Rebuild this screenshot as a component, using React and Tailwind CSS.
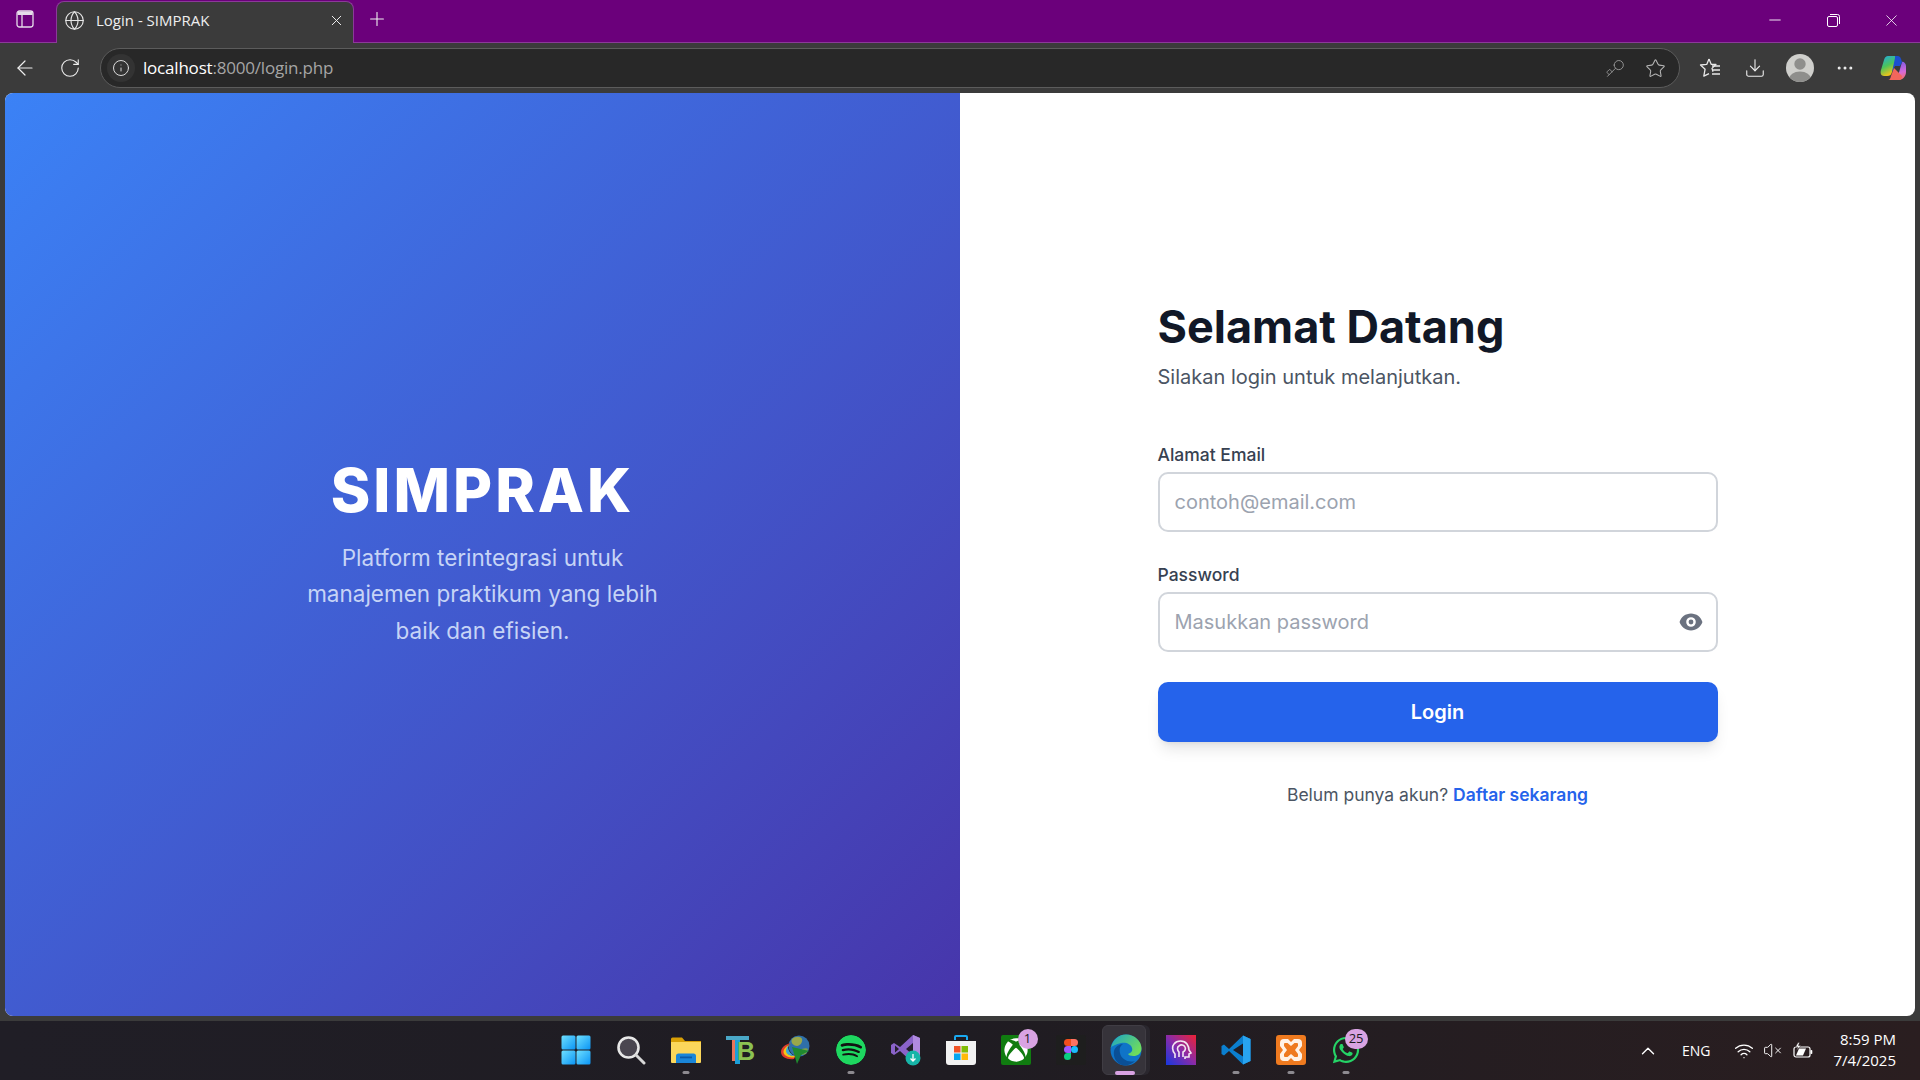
import { ArrowLeft, RotateCw, Info, Key, Star, Download, MoreHorizontal, Globe, X, Plus, Minus, ChevronUp, Wifi, VolumeX } from 'lucide-react';
import { SiSpotify } from 'react-icons/si';
import { FaWhatsapp, FaXbox } from 'react-icons/fa';

const WinIcon = () => (
    <svg width="30" height="30" viewBox="0 0 30 30">
        <defs>
            <linearGradient id="win" x1="0" y1="0" x2="1" y2="1">
                <stop offset="0" stopColor="#6fe0ff" />
                <stop offset="1" stopColor="#0a94f5" />
            </linearGradient>
        </defs>
        <rect x="0.5" y="0.5" width="14" height="14" rx="1.5" fill="url(#win)" />
        <rect x="15.5" y="0.5" width="14" height="14" rx="1.5" fill="url(#win)" />
        <rect x="0.5" y="15.5" width="14" height="14" rx="1.5" fill="url(#win)" />
        <rect x="15.5" y="15.5" width="14" height="14" rx="1.5" fill="url(#win)" />
    </svg>
);

const SearchIcon = () => (
    <svg width="30" height="30" viewBox="0 0 30 30">
        <circle cx="12.5" cy="12.5" r="10" fill="#4a4650" stroke="#e8e8e8" strokeWidth="2.6" />
        <path d="M20 20l8 8" stroke="#d8d8d8" strokeWidth="3" strokeLinecap="round" />
    </svg>
);

const FolderIcon = () => (
    <svg width="30" height="30" viewBox="0 0 30 30">
        <path d="M0 4a1.5 1.5 0 0 1 1.5-1.500H11l3 3.500H30v6H0z" fill="#d9a006" />
        <path d="M0 7h30v20a1 1 0 0 1-1 1H1a1 1 0 0 1-1-1z" fill="#fbd75b" />
        <path d="M5 28v-7a2.500 2.500 0 0 1 2.500-2.500h15A2.500 2.500 0 0 1 25 21v7z" fill="#1a86d9" />
        <rect x="9" y="21.500" width="12" height="1.800" fill="#0a5aa8" />
    </svg>
);

const TbIcon = () => (
    <svg width="30" height="30" viewBox="0 0 30 30">
        <rect x="0" y="1" width="23" height="4" fill="#4aa8c8" />
        <rect x="6" y="5" width="5" height="21" fill="#e8755a" />
        <rect x="9" y="5" width="5" height="24" fill="#1c9ed8" />
        <text x="11" y="25" fontFamily="'Liberation Sans', sans-serif" fontWeight="700" fontSize="25" fill="#8cc152">B</text>
    </svg>
);

const IdmIcon = () => (
    <svg width="32" height="30" viewBox="0 0 32 30">
        <circle cx="19" cy="11" r="10.500" fill="#2f6fa8" />
        <path d="M12 4c3-3 9-3 10 0s-2 7-5 7-7-3-5-7z" fill="#9aa84a" />
        <path d="M22 14c2-1 5-1 6 0l-2 5-4 1z" fill="#7aa04a" />
        <path d="M1 17c0-5 5-8 10-9-3 2-5 4-5 7 0 4 4 6 10 5l-2 4C7 25 1 22 1 17z" fill="#e23b2a" />
        <path d="M3.500 17c0-3 3-6 6-7-2 2-2.500 4-2.500 6 0 3 3 5 8 5l-1 1.500c-6 0-10.500-2-10.500-5.500z" fill="#f2c518" />
        <path d="M6 16c0-2 1-4 2-5 0 4 2 8 7 10-5 0-9-2-9-5z" fill="#3aa5d8" />
        <path d="M12 12l17 4-8 4-4 9z" fill="#1f8a2e" />
    </svg>
);

const VsIcon = () => (
    <svg width="32" height="32" viewBox="0 0 32 32">
        <path d="M23 1l7 3v22l-7 3-13-12-6 4-3-2V11l3-2 6 4z" fill="#8a63c9" />
        <path d="M23 1l7 3v22l-7 3z" fill="#b08ae0" />
        <path d="M5 11.500v7l4-3.500zM23 9l-7 6 7 6z" fill="#241f2a" />
        <circle cx="23" cy="24" r="7.500" fill="#17b5a8" />
        <path d="M23 20v7m-2.500-2.500L23 27l2.500-2.500" stroke="#fff" strokeWidth="1.300" fill="none" />
    </svg>
);

const StoreIcon = () => (
    <svg width="30" height="32" viewBox="0 0 30 32">
        <path d="M9 6V3a1 1 0 0 1 1-1h10a1 1 0 0 1 1 1v3" fill="none" stroke="#19a9f0" strokeWidth="2" />
        <path d="M0 7h30v21a3 3 0 0 1-3 3H3a3 3 0 0 1-3-3z" fill="#f2f2f2" />
        <rect x="8" y="12" width="6.500" height="6.500" fill="#f05325" />
        <rect x="15.500" y="12" width="6.500" height="6.500" fill="#81bc06" />
        <rect x="8" y="19.500" width="6.500" height="6.500" fill="#05a6f0" />
        <rect x="15.500" y="19.500" width="6.500" height="6.500" fill="#ffba08" />
    </svg>
);

const EdgeIcon = () => (
    <svg width="32" height="32" viewBox="0 0 32 32">
        <defs>
            <linearGradient id="edgeTop" x1="0" y1="0" x2="1" y2="0.6">
                <stop offset="0" stopColor="#1aa3c9" />
                <stop offset="1" stopColor="#6fdc5c" />
            </linearGradient>
        </defs>
        <circle cx="16" cy="16" r="15.500" fill="#0f74c8" />
        <path d="M1 14C3 5 9 .5 16 .5c9 0 15.500 7 15.500 14 0 5-4 7.500-8 7.500-3 0-5-1-5.500-2 3-1 5-3 4-6-1-4-6-6-11-5-5 1-9 3-10.500 5z" fill="url(#edgeTop)" />
        <path d="M12 31c-6-2-9-8-8-14 1-4 5-7 9-7-3 2-4 5-3 9 1 6 8 10 15 8-3 3-8 5.500-13 4z" fill="#0a4f96" />
    </svg>
);

const ProtonIcon = () => (
    <svg width="30" height="30" viewBox="0 0 30 30">
        <defs>
            <linearGradient id="pt" x1="0" y1="1" x2="1" y2="0">
                <stop offset="0" stopColor="#1638e0" />
                <stop offset="0.5" stopColor="#8a2ba8" />
                <stop offset="1" stopColor="#ee2234" />
            </linearGradient>
        </defs>
        <rect width="30" height="30" fill="url(#pt)" />
        <path d="M9 23v-4c-3-3-3-8-1-10 3-4 10-4 13 0 2 3 2 5 2 6l2 3-2 1v3h-4v2" fill="none" stroke="#f2e6f2" strokeWidth="1.600" />
        <path d="M13 22v-5c-2-2-2-5 0-6 2-2 5-1 6 1s0 4-2 5v5" fill="none" stroke="#f2e6f2" strokeWidth="1.600" />
    </svg>
);

const VscodeIcon = () => (
    <svg width="30" height="30" viewBox="0 0 30 30">
        <path d="M22 .500l7.500 3.500v22L22 29.500 8 16l-5 4.500-2.500-1.500v-8L3 9.500 8 14z" fill="#0b7fcf" />
        <path d="M22 .500l7.500 3.500v22L22 29.500z" fill="#28a4f0" />
        <path d="M22 8.500L12 15l10 6.500z" fill="#201d24" />
    </svg>
);

const XamppIcon = () => (
    <svg width="30" height="30" viewBox="0 0 30 30">
        <rect width="30" height="30" rx="3" fill="#ef7a1f" />
        <path d="M8 4h4l3 3 3-3h4a4 4 0 0 1 4 4v3l-3 4 3 4v3a4 4 0 0 1-4 4h-4l-3-3-3 3H8a4 4 0 0 1-4-4v-3l3-4-3-4V8a4 4 0 0 1 4-4z" fill="#fff2e6" />
        <path d="M9 8h2.500L15 11l3.500-3H21a1 1 0 0 1 1 1v2l-3 4 3 4v2a1 1 0 0 1-1 1h-2.500L15 19l-3.500 3H9a1 1 0 0 1-1-1v-2l3-4-3-4V9a1 1 0 0 1 1-1z" fill="#ef7a1f" />
    </svg>
);

const Copilot = () => (
    <svg width="28" height="28" viewBox="0 0 28 28">
        <defs>
            <linearGradient id="cpA" x1="0" y1="0" x2="0.4" y2="1">
                <stop offset="0" stopColor="#1fa8e8" />
                <stop offset="0.55" stopColor="#4cc45a" />
                <stop offset="1" stopColor="#f5c518" />
            </linearGradient>
            <linearGradient id="cpB" x1="0.4" y1="0" x2="0.6" y2="1">
                <stop offset="0" stopColor="#7a5ae8" />
                <stop offset="0.6" stopColor="#d66ad8" />
                <stop offset="1" stopColor="#f4706a" />
            </linearGradient>
        </defs>
        <path d="M9 2h9l-5 16c-1 3-2 4-5 4H5c-3 0-4-3-3-6l3-10c1-3 2-4 4-4z" fill="url(#cpA)" />
        <path d="M15 26h-1c3 0 4-1 5-4l4-14c1-1 4 1 4 4v6c0 4-3 8-7 8z" fill="url(#cpB)" />
        <path d="M16 2h3c2 0 3 2 4 6l-2 4h-5l-3 6 3-14z" fill="#1b4fd0" />
        <path d="M9 26h11c2 0 3-2 3-4l-8-8-3 8c-.5 2-1 4-3 4z" fill="#f2665c" />
    </svg>
);

const Profile = () => (
    <svg width="28" height="28" viewBox="0 0 28 28">
        <clipPath id="pf"><circle cx="14" cy="14" r="14" /></clipPath>
        <circle cx="14" cy="14" r="14" fill="#cfcfcc" />
        <g clipPath="url(#pf)" fill="#8e8e8c">
            <circle cx="14" cy="10" r="5.700" />
            <ellipse cx="14" cy="25" rx="11" ry="7.500" />
        </g>
    </svg>
);

const FavoritesIcon = () => (
    <svg width="22" height="22" viewBox="0 0 22 22" fill="none" stroke="#e8e8e8" strokeWidth="1.300">
        <path d="M10 2l2.300 5.400H17l-4 4 1 3.300M10 2L7.700 7.400 1.500 8l4.600 4.200-1.300 7 5.200-2.500" strokeLinejoin="round" />
        <path d="M13 9h8M13 13h8M13 17h8" />
    </svg>
);

const SidebarIcon = () => (
    <svg width="18" height="18" viewBox="0 0 18 18" fill="none">
        <rect x="1" y="1" width="16" height="16" rx="2.500" stroke="#e6dcea" strokeWidth="1.300" />
        <path d="M1.500 3.500a2 2 0 0 1 2-2h11a2 2 0 0 1 2 2V5h-15z" fill="#e6dcea" />
        <path d="M6 5v12" stroke="#e6dcea" strokeWidth="1.300" />
    </svg>
);

const RestoreIcon = () => (
    <svg width="13" height="13" viewBox="0 0 13 13" fill="none" stroke="#fff" strokeWidth="1">
        <rect x="0.500" y="2.500" width="10" height="10" rx="1.500" />
        <path d="M3 .500h7.500a2 2 0 0 1 2 2V10" />
    </svg>
);

const BatteryIcon = () => (
    <svg width="20" height="18" viewBox="0 0 20 18" fill="none">
        <rect x="1" y="5" width="16" height="10" rx="2" stroke="#fff" strokeWidth="1.200" />
        <rect x="17.500" y="8" width="1.800" height="4" rx="0.800" fill="#fff" />
        <path d="M3 13.500h7l3-7H6z" fill="#fff" />
        <path d="M5 .500L2.500 5H5L3.500 8.500 8 3.500H5.500L6.500 .500z" fill="#fff" stroke="#2a2023" strokeWidth="0.500" />
    </svg>
);

const EyeIcon = () => (
    <svg width="24" height="24" viewBox="0 0 20 20" fill="#6b7280">
        <path d="M10 12a2 2 0 100-4 2 2 0 000 4z" />
        <path fillRule="evenodd" clipRule="evenodd" d="M.458 10C1.732 5.943 5.522 3 10 3s8.268 2.943 9.542 7c-1.274 4.057-5.064 7-9.542 7S1.732 14.057.458 10zM14 10a4 4 0 11-8 0 4 4 0 018 0z" />
    </svg>
);

const Dot = () => <span className="absolute bottom-0 left-1/2 -translate-x-1/2 w-[7px] h-[3px] rounded-full bg-[#8d8a90]" />;

const Badge = ({ children }) => (
    <span className="absolute -top-[6px] -right-[7px] min-w-[20px] h-[20px] px-[4px] rounded-full bg-[#d9a3e3] text-[#1c1a1f] text-[13px] flex items-center justify-center">
        {children}
    </span>
);

const apps = [
    { key: 'win', icon: <WinIcon /> },
    { key: 'search', icon: <SearchIcon /> },
    { key: 'files', icon: <FolderIcon />, running: true },
    { key: 'tb', icon: <TbIcon /> },
    { key: 'idm', icon: <IdmIcon /> },
    { key: 'spotify', icon: <SiSpotify className="text-[#1ed760] bg-[#121212] rounded-full" size={30} />, running: true },
    { key: 'vs', icon: <VsIcon /> },
    { key: 'store', icon: <StoreIcon /> },
    {
        key: 'xbox',
        icon: (
            <span className="w-[30px] h-[30px] bg-[#107c10] rounded-[2px] flex items-center justify-center">
                <FaXbox className="text-white" size={24} />
            </span>
        ),
        badge: '1',
    },
    {
        key: 'figma',
        icon: (
            <span className="w-[30px] h-[30px] bg-[#1e1e1e] rounded-[2px] flex items-center justify-center">
                <svg width="14" height="21" viewBox="0 0 14 21">
                    <path d="M3.500 0H7v7H3.500a3.500 3.500 0 0 1 0-7z" fill="#f24e1e" />
                    <path d="M7 0h3.500a3.500 3.500 0 0 1 0 7H7z" fill="#ff7262" />
                    <path d="M3.500 7H7v7H3.500a3.500 3.500 0 0 1 0-7z" fill="#a259ff" />
                    <circle cx="10.500" cy="10.500" r="3.500" fill="#1abcfe" />
                    <path d="M3.500 14H7v3.500A3.500 3.500 0 1 1 3.500 14z" fill="#0acf83" />
                </svg>
            </span>
        ),
    },
    { key: 'edge', icon: <EdgeIcon />, active: true },
    { key: 'proton', icon: <ProtonIcon /> },
    { key: 'vscode', icon: <VscodeIcon />, running: true },
    { key: 'xampp', icon: <XamppIcon />, running: true },
    { key: 'whatsapp', icon: <FaWhatsapp className="text-[#25d366]" size={30} />, running: true, badge: '25' },
];

const App = () => {
    return (
        <div className="w-screen h-screen overflow-hidden flex flex-col bg-[#3b3b3b] font-['Inter',sans-serif]">
            {/* Tab strip */}
            <div className="h-[43px] shrink-0 bg-[#6b007b] flex items-end border-b border-[#8b3a99]">
                <div className="w-[56px] h-[42px] flex items-center justify-center pb-[4px] pr-[6px]">
                    <SidebarIcon />
                </div>
                <div className="w-[298px] h-[42px] bg-[#3b3b3b] rounded-t-lg flex items-center pl-[7px] pr-[8px] pb-[5px] -mb-px border-t border-x border-[#8b3a99]">
                    <Globe size={21} strokeWidth={1.3} className="text-[#e5e5e5]" />
                    <span className="ml-[11px] flex-1 text-[15px] text-[#eeeeee] font-['Open_Sans',sans-serif]">Login - SIMPRAK</span>
                    <X size={17} strokeWidth={1.4} className="text-[#eeeeee]" />
                </div>
                <div className="w-[46px] h-[42px] flex items-center justify-center pb-[4px]">
                    <Plus size={22} strokeWidth={1.2} className="text-[#f0f0f0]" />
                </div>
                <div className="flex-1" />
                <div className="h-[42px] flex items-center pb-[2px]">
                    <div className="w-[58px] flex justify-center"><Minus size={18} strokeWidth={1.2} className="text-white" /></div>
                    <div className="w-[58px] flex justify-center"><RestoreIcon /></div>
                    <div className="w-[58px] flex justify-center"><X size={19} strokeWidth={1} className="text-white" /></div>
                </div>
            </div>

            {/* Toolbar */}
            <div className="h-[50px] shrink-0 flex items-center pl-[2px] pr-[13px]">
                <div className="w-[45px] flex justify-center"><ArrowLeft size={24} strokeWidth={1.2} className="text-[#eeeeee]" /></div>
                <div className="w-[45px] flex justify-center"><RotateCw size={22} strokeWidth={1.2} className="text-[#eeeeee]" /></div>
                <div className="ml-[8px] flex-1 h-[40px] bg-[#282828] border border-[#5c5c5c] rounded-full flex items-center pl-[6px] pr-[13px]">
                    <div className="w-[28px] h-[28px] rounded-full bg-[#333333] flex items-center justify-center">
                        <Info size={18} strokeWidth={1.3} className="text-[#dddddd]" />
                    </div>
                    <div className="ml-[8px] flex-1 text-[17px] tracking-[-0.2px] font-['Open_Sans',sans-serif] text-white">
                        localhost<span className="text-[#a5a5a5]">:8000/login.php</span>
                    </div>
                    <Key size={20} strokeWidth={1.1} className="text-[#999999] rotate-180 mr-[20px]" />
                    <Star size={21} strokeWidth={1.2} className="text-[#b5b5b5]" />
                </div>
                <div className="ml-[7px] w-[45px] flex justify-center"><FavoritesIcon /></div>
                <div className="w-[45px] flex justify-center"><Download size={22} strokeWidth={1.2} className="text-[#eeeeee]" /></div>
                <div className="w-[45px] flex justify-center"><Profile /></div>
                <div className="w-[45px] flex justify-center"><MoreHorizontal size={20} strokeWidth={1.6} className="text-[#eeeeee]" /></div>
                <div className="w-[40px] flex justify-end"><Copilot /></div>
            </div>

            {/* Page */}
            <div className="flex-1 min-h-0 px-[5px] pb-[5px]">
                <div className="h-full flex rounded-lg overflow-hidden bg-white">
                    <div className="w-1/2 bg-linear-to-br/srgb from-[#3b82f6] to-[#4735aa] flex flex-col items-center justify-center text-center">
                        <h1 className="text-[60px] leading-[60px] font-extrabold text-white tracking-[3px] mb-[20px]">SIMPRAK</h1>
                        <p className="w-[400px] text-[22.5px] leading-[36.560px] text-[#c6d4f6]">
                            Platform terintegrasi untuk manajemen praktikum yang lebih baik dan efisien.
                        </p>
                    </div>
                    <div className="w-1/2 flex items-center justify-center">
                        <div className="w-[560px]">
                            <h2 className="text-[45px] leading-[50px] font-bold text-[#111827] mb-[10px]">Selamat Datang</h2>
                            <p className="text-[20px] leading-[30px] text-[#4b5563] mb-[50px]">Silakan login untuk melanjutkan.</p>
                            <label className="block text-[17.500px] leading-[25px] font-medium text-[#374151] mb-[5px]">Alamat Email</label>
                            <input
                                type="email"
                                placeholder="contoh@email.com"
                                className="block w-full h-[60px] px-[15px] border-2 border-[#d1d5db] rounded-[10px] text-[20px] placeholder:text-[#9ca3af] mb-[30px]"
                            />
                            <label className="block text-[17.500px] leading-[25px] font-medium text-[#374151] mb-[5px]">Password</label>
                            <div className="relative mb-[30px]">
                                <input
                                    type="password"
                                    placeholder="Masukkan password"
                                    className="block w-full h-[60px] px-[15px] border-2 border-[#d1d5db] rounded-[10px] text-[20px] placeholder:text-[#9ca3af]"
                                />
                                <span className="absolute right-[15px] top-[18px]"><EyeIcon /></span>
                            </div>
                            <button className="w-full h-[60px] bg-[#2563eb] rounded-[10px] text-white text-[20px] font-semibold shadow-lg">Login</button>
                            <p className="mt-[40px] text-center text-[17.500px] leading-[25px] text-[#4b5563]">
                                Belum punya akun? <a className="font-semibold text-[#2563eb]">Daftar sekarang</a>
                            </p>
                        </div>
                    </div>
                </div>
            </div>

            {/* Taskbar */}
            <div className="h-[59px] shrink-0 grid grid-cols-[1fr_auto_1fr] items-center bg-gradient-to-r from-[#201e26] via-[#1f1c22] to-[#2a1e20] text-white font-['Open_Sans',sans-serif]">
                <div />
                <div className="flex items-center -mt-[2px] pl-[1px]">
                    {apps.map((app) => (
                        <div key={app.key} className="relative w-[55px] h-[48px] flex items-center justify-center">
                            {app.active && (
                                <>
                                    <span className="absolute left-[8px] top-[-1px] w-[44px] h-[50px] rounded-md bg-[#2a272e]" />
                                    <span className="absolute left-[4px] top-[-1px] w-[44px] h-[50px] rounded-md bg-[#36333a] border border-[#403d44]" />
                                </>
                            )}
                            <span className="relative flex">
                                {app.icon}
                                {app.badge && <Badge>{app.badge}</Badge>}
                            </span>
                            {app.running && <Dot />}
                            {app.active && <span className="absolute bottom-[-1px] left-[17px] w-[20px] h-[4px] rounded-full bg-[#d9a3e3]" />}
                        </div>
                    ))}
                </div>
                <div className="flex items-center justify-end pr-[24px]">
                    <ChevronUp size={22} strokeWidth={1.5} className="mr-[23px]" />
                    <span className="text-[14px] mr-[23px]">ENG</span>
                    <Wifi size={20} strokeWidth={1.6} className="mr-[9px]" />
                    <VolumeX size={19} strokeWidth={1.2} className="mr-[11px]" />
                    <BatteryIcon />
                    <div className="ml-[21px] -mt-[2px] text-right text-[15px] leading-[21px]">
                        <div>8:59 PM</div>
                        <div>7/4/2025</div>
                    </div>
                </div>
            </div>
        </div>
    );
};

export default App;
